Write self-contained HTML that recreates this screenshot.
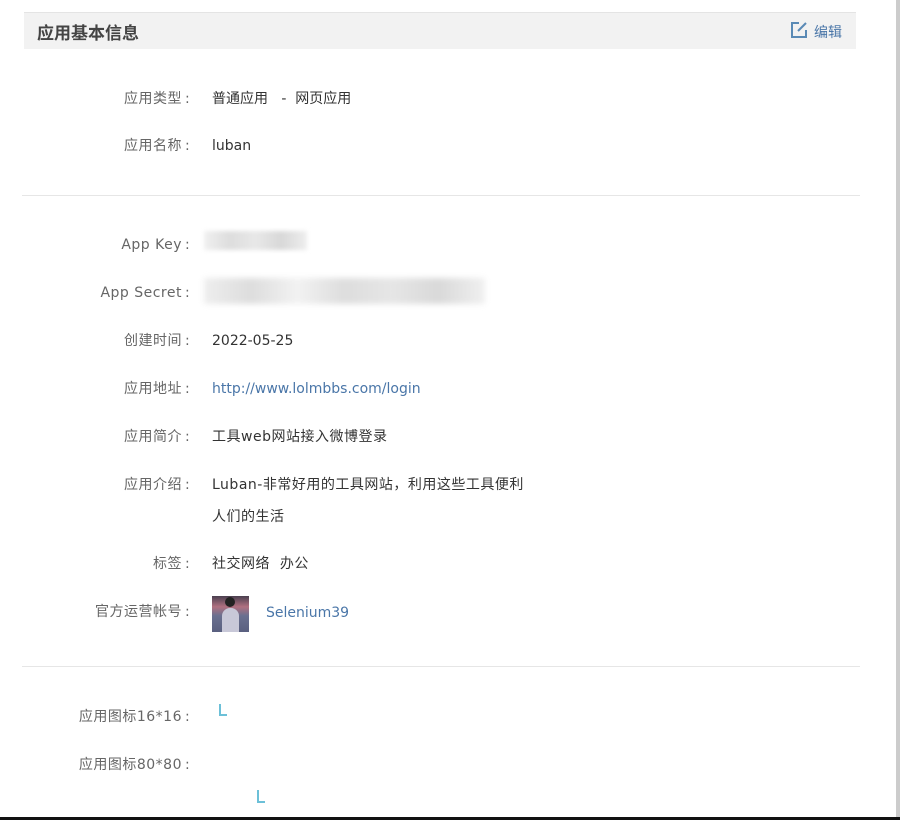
<!DOCTYPE html>
<html><head><meta charset="utf-8"><style>
body{margin:0;width:900px;height:820px;background:#fff;position:relative;overflow:hidden;font-family:"DejaVu Sans","Noto Sans CJK SC",sans-serif;font-size:14px;color:#333}
.a{position:absolute;white-space:nowrap}
.hd{position:absolute;left:24px;top:12px;width:832px;height:36px;background:#f2f2f2;border-top:1px solid #e4e4e4}
.l{position:absolute;right:718px;color:#666;white-space:nowrap;line-height:20px;letter-spacing:0.5px}
.l::after{content:":";position:absolute;left:100%;margin-left:3px;top:0}
.v{position:absolute;left:212px;white-space:nowrap;line-height:20px}
.hr{position:absolute;left:22px;width:838px;height:1px;background:#e6e6e6}
.lk{color:#4a76a8}
</style></head><body>
<div class="hd"></div>
<div class="a" style="left:37px;top:20px;font-size:17px;font-weight:bold;color:#444;font-family:'Noto Sans CJK SC',sans-serif;line-height:24px">应用基本信息</div>
<svg class="a" style="left:790px;top:21px" width="18" height="18" viewBox="0 0 18 18"><path d="M9 2H2v14h14V9" fill="none" stroke="#5a8ab5" stroke-width="2"/><path d="M8 10l8-8" stroke="#5a8ab5" stroke-width="2"/></svg>
<div class="a lk" style="left:814px;top:22px;font-size:14px">编辑</div>
<div class="l" style="top:89px">应用类型</div><div class="v" style="top:89px">普通应用&nbsp;&nbsp; - &nbsp;网页应用</div>
<div class="l" style="top:136px">应用名称</div><div class="v" style="top:136px">luban</div>
<div class="hr" style="top:195px"></div>
<div class="l" style="top:235px">App Key</div>
<div class="a" style="left:204px;top:231px;width:103px;height:19px;background:linear-gradient(90deg,#f0f0f0,#ddd,#e8e8e8,#d8d8d8,#eee);filter:blur(2px)"></div>
<div class="l" style="top:283px">App Secret</div>
<div class="a" style="left:204px;top:278px;width:281px;height:26px;background:linear-gradient(90deg,#eee,#ddd,#f2f2f2,#ddd,#e6e6e6,#d9d9d9,#f0f0f0);filter:blur(3px)"></div>
<div class="l" style="top:331px">创建时间</div><div class="v" style="top:331px">2022-05-25</div>
<div class="l" style="top:379px">应用地址</div><div class="v lk" style="top:379px">http://www.lolmbbs.com/login</div>
<div class="l" style="top:427px">应用简介</div><div class="v" style="top:427px;letter-spacing:0.5px">工具web网站接入微博登录</div>
<div class="l" style="top:475px">应用介绍</div><div class="v" style="top:475px;line-height:32px;margin-top:-6px;letter-spacing:0.5px">Luban-非常好用的工具网站，利用这些工具便利<br>人们的生活</div>
<div class="l" style="top:554px">标签</div><div class="v" style="top:554px;letter-spacing:0.5px">社交网络&nbsp; 办公</div>
<div class="l" style="top:602px">官方运营帐号</div>
<div class="a" style="left:212px;top:596px;width:37px;height:36px;background:linear-gradient(180deg,#4a4050 0%,#b07080 30%,#6a7090 55%,#5a6080 100%)"><div style="position:absolute;left:10px;top:12px;width:17px;height:24px;border-radius:8px 8px 0 0;background:#c8c8d8"></div><div style="position:absolute;left:13px;top:1px;width:10px;height:10px;border-radius:5px;background:#222"></div></div>
<div class="v lk" style="left:266px;top:603px">Selenium39</div>
<div class="hr" style="top:666px"></div>
<div class="l" style="top:707px">应用图标16*16</div>
<div class="a" style="left:219px;top:704px;width:6px;height:10px;border-left:2px solid #6cc0d8;border-bottom:2px solid #6cc0d8"></div>
<div class="l" style="top:755px">应用图标80*80</div>
<div class="a" style="left:257px;top:790px;width:6px;height:11px;border-left:2px solid #6cc0d8;border-bottom:2px solid #6cc0d8"></div>
<div class="a" style="left:896px;top:0;width:4px;height:820px;background:#ccc"></div>
<div class="a" style="left:0;top:817px;width:900px;height:3px;background:#111"></div>
</body></html>
